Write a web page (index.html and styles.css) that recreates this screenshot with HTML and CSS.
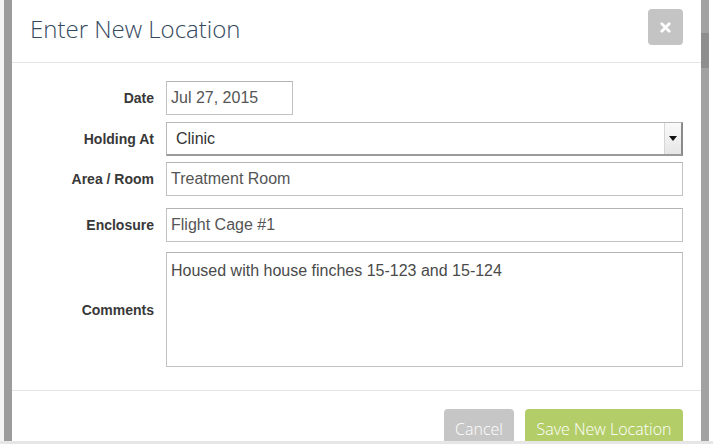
FILE: index.html
```html
<!DOCTYPE html>
<html>
<head>
<meta charset="utf-8">
<link rel="stylesheet" href="styles.css">
</head>
<body>
<div class="screen">
  <div class="gutter-left"><div class="edge"></div><div class="shade"></div></div>
  <div class="modal">
    <div class="modal-header">
      <h1 class="title">Enter New Location</h1>
      <button class="close" type="button" aria-label="Close">
        <svg width="11" height="11" viewBox="0 0 11 11"><path d="M1.8 1.8L9.2 9.2M9.2 1.8L1.8 9.2" stroke="#fff" stroke-width="2.8" stroke-linecap="round"/></svg>
      </button>
    </div>
    <div class="modal-body">
      <div class="row row-date">
        <label class="label">Date</label>
        <div class="field field-date">Jul 27, 2015</div>
      </div>
      <div class="row row-holding">
        <label class="label">Holding At</label>
        <div class="field field-select">
          <span class="select-text">Clinic</span>
          <span class="select-arrow"><svg width="8" height="5" viewBox="0 0 8 5"><path d="M0 0H8L4 5Z" fill="#111"/></svg></span>
        </div>
      </div>
      <div class="row row-area">
        <label class="label">Area / Room</label>
        <div class="field">Treatment Room</div>
      </div>
      <div class="row row-enclosure">
        <label class="label">Enclosure</label>
        <div class="field">Flight Cage #1</div>
      </div>
      <div class="row row-comments">
        <label class="label">Comments</label>
        <div class="field field-textarea">Housed with house finches 15-123 and 15-124</div>
      </div>
    </div>
    <div class="modal-footer">
      <button class="btn btn-cancel" type="button">Cancel</button>
      <button class="btn btn-save" type="button">Save New Location</button>
    </div>
  </div>
  <div class="gutter-right"><div class="shade-right"><div class="band"></div></div><div class="edge-right"></div></div>
</div>
<div class="bottom-strip"></div>
</body>
</html>
```

FILE: styles.css
```css
html, body {
  margin: 0;
  padding: 0;
  background: #ffffff;
}
body {
  width: 713px;
  height: 444px;
  overflow: hidden;
}
.screen {
  display: flex;
  height: 441px;
}
.gutter-left {
  display: flex;
  width: 12px;
  flex: none;
}
.edge {
  width: 4px;
  background: #f4f4f4;
}
.shade {
  width: 8px;
  background: #9c9c9c;
}
.gutter-right {
  display: flex;
  width: 12px;
  flex: none;
}
.shade-right {
  width: 8px;
  background: #a2a2a2;
  display: flex;
  flex-direction: column;
}
.band {
  margin-top: 33px;
  height: 35px;
  background: #8e8e8e;
}
.edge-right {
  width: 4px;
  background: #ffffff;
}
.modal {
  width: 689px;
  flex: none;
  background: #ffffff;
  display: flex;
  flex-direction: column;
  overflow: hidden;
}
.modal-header {
  height: 62px;
  border-bottom: 1px solid #e5e5e5;
  display: flex;
  justify-content: space-between;
  align-items: flex-start;
  padding: 0 18px;
  flex: none;
}
.title {
  margin: 14px 0 0 0;
  font-family: "Open Sans", sans-serif;
  font-weight: 300;
  font-size: 24px;
  line-height: 30px;
  color: #34495e;
}
.close {
  margin-top: 9px;
  width: 35px;
  height: 36px;
  border: none;
  border-radius: 4px;
  background: #c4c4c4;
  display: flex;
  align-items: center;
  justify-content: center;
  padding: 0;
}
.modal-body {
  height: 328px;
  flex: none;
  border-bottom: 1px solid #e5e5e5;
  padding: 18px 18px 0 0;
  box-sizing: border-box;
  display: flex;
  flex-direction: column;
}
.row {
  display: flex;
  align-items: center;
  gap: 12px;
}
.row-holding { margin-top: 7px; }
.row-area { margin-top: 6px; }
.row-enclosure { margin-top: 12px; }
.row-comments { margin-top: 10px; }
.label {
  width: 142px;
  flex: none;
  text-align: right;
  font-family: "Liberation Sans", Arial, sans-serif;
  font-weight: 700;
  font-size: 14px;
  color: #383838;
}
.field {
  flex: 1;
  height: 34px;
  box-sizing: border-box;
  border: 1px solid #c2c2c2;
  border-top-color: #b4b4b4;
  padding: 0 4px;
  display: flex;
  align-items: center;
  font-family: "Liberation Sans", Arial, sans-serif;
  font-size: 16px;
  color: #555555;
  background: #ffffff;
}
.field-date {
  flex: none;
  width: 127px;
}
.field-select {
  padding: 0 0 0 9px;
  border-color: #b8b8b8;
  border-bottom: 2px solid #9a9a9a;
  border-right: 2px solid #8a8a8a;
  justify-content: space-between;
}
.select-text {
  color: #333333;
}
.select-arrow {
  width: 16px;
  height: 100%;
  background: linear-gradient(#fafafa, #e6e6e6);
  border-left: 1px solid #d6d6d6;
  display: flex;
  align-items: center;
  justify-content: center;
}
.field-textarea {
  height: 115px;
  align-items: flex-start;
  padding: 8px 4px;
  line-height: 20px;
  color: #4a4a4a;
}
.modal-footer {
  display: flex;
  justify-content: flex-end;
  gap: 11px;
  padding: 18px 18px 0 0;
}
.btn {
  border: none;
  border-radius: 4px 4px 0 0;
  font-family: "Open Sans", sans-serif;
  font-weight: 300;
  font-size: 16px;
  line-height: 22px;
  color: #ffffff;
  padding: 9px 0 7px 0;
  height: 38px;
}
.btn-cancel {
  width: 70px;
  background: #c6c6c6;
}
.btn-save {
  width: 158px;
  background: #b3ce69;
}
.bottom-strip {
  height: 3px;
  background: #e6e6e6;
}
```
